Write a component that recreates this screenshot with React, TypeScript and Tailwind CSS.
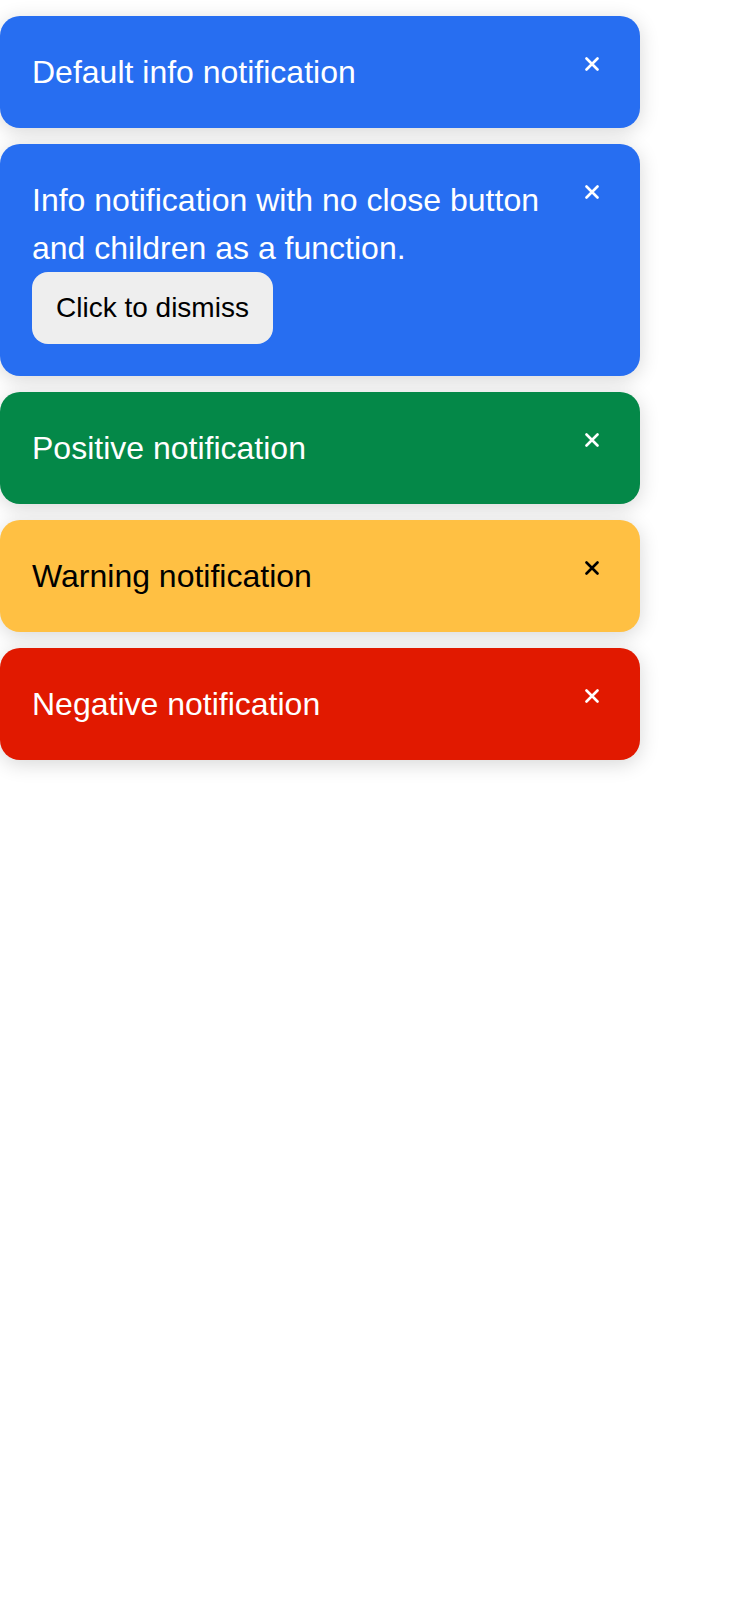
import React from 'react';

type Kind = 'info' | 'positive' | 'warning' | 'negative';

const kindStyles: Record<Kind, string> = {
  info: 'bg-[#276ef1] text-white',
  positive: 'bg-[#048848] text-white',
  warning: 'bg-[#ffc043] text-black',
  negative: 'bg-[#e11900] text-white',
};

function CloseIcon() {
  return (
    <svg width="14" height="14" viewBox="0 0 14 14" fill="none" aria-hidden="true">
      <path d="M1.5 1.5L12.5 12.5M12.5 1.5L1.5 12.5" stroke="currentColor" strokeWidth="2.6" strokeLinecap="round" />
    </svg>
  );
}

interface ToastProps {
  kind: Kind;
  children: React.ReactNode;
}

function Toast({ kind, children }: ToastProps) {
  return (
    <div
      className={`flex w-[640px] items-start rounded-[20px] p-8 shadow-[0_4px_20px_rgba(0,0,0,0.16)] ${kindStyles[kind]}`}
    >
      <div className="flex-1 text-[32px] leading-[48px]">{children}</div>
      <button className="ml-4 mr-[9px] mt-[9px] flex h-[14px] w-[14px] items-center justify-center">
        <CloseIcon />
      </button>
    </div>
  );
}

export default function App() {
  return (
    <div
      className="flex min-h-[1600px] flex-col items-start gap-4 bg-white pt-4"
      style={{ fontFamily: '"Liberation Sans", Arial, sans-serif' }}
    >
      <Toast kind="info">Default info notification</Toast>
      <Toast kind="info">
        <div>Info notification with no close button and children as a function.</div>
        <button className="rounded-[16px] bg-[#eeeeee] px-6 py-5 text-[28px] leading-8 text-black">
          Click to dismiss
        </button>
      </Toast>
      <Toast kind="positive">Positive notification</Toast>
      <Toast kind="warning">Warning notification</Toast>
      <Toast kind="negative">Negative notification</Toast>
    </div>
  );
}
